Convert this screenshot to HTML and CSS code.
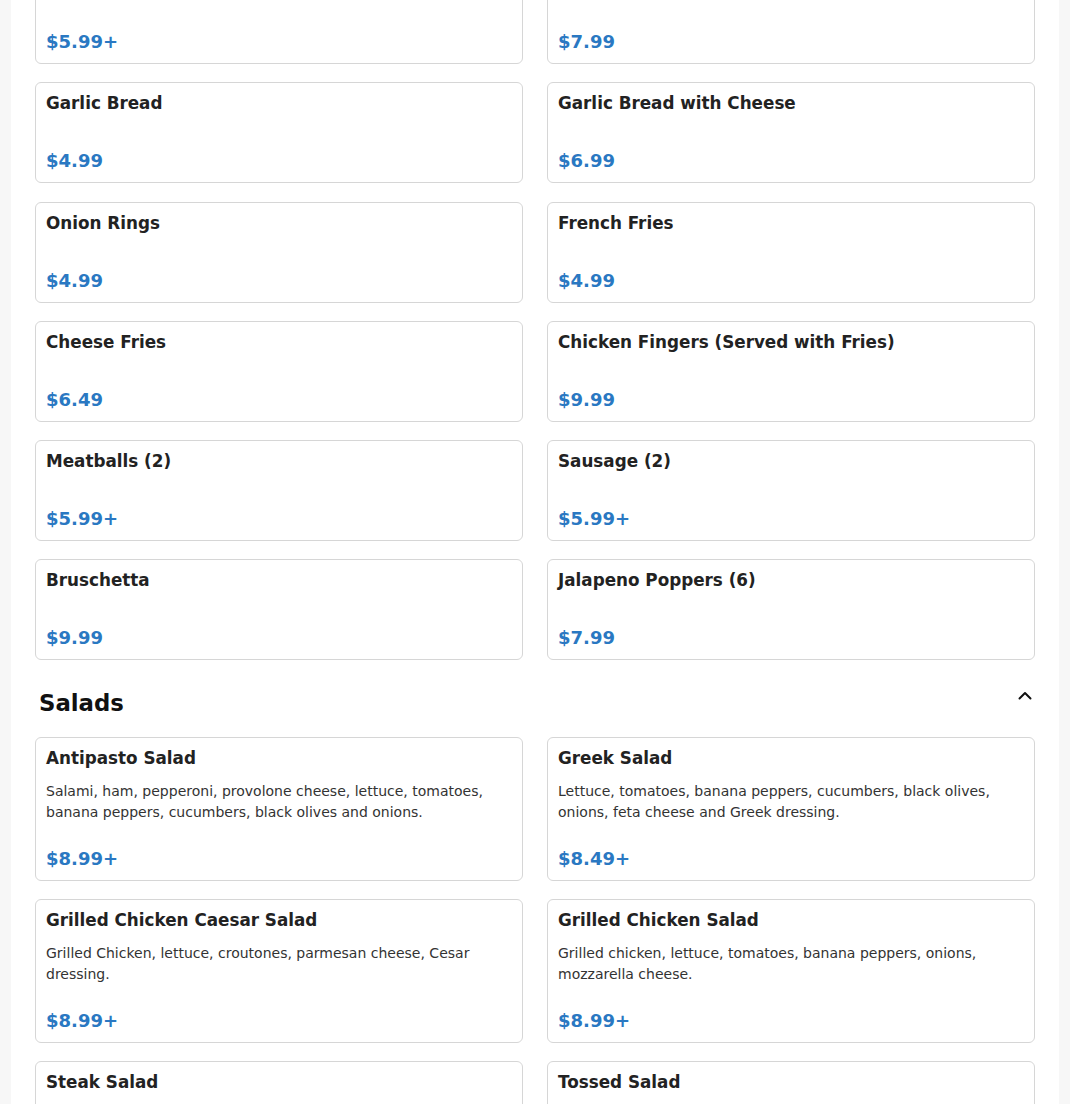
FILE: index.html
```html
<!DOCTYPE html>
<html lang="en">
<head>
<meta charset="utf-8">
<title>Menu</title>
<link rel="stylesheet" href="styles.css">
</head>
<body>
<main class="page">
  <section class="section section-scrolled">
    <div class="grid">
      <article class="card"><h3 class="card-title">Chicken Wings</h3><p class="card-desc"></p><div class="card-price">$5.99+</div></article>
      <article class="card"><h3 class="card-title">Mozzarella Sticks (6)</h3><p class="card-desc"></p><div class="card-price">$7.99</div></article>
      <article class="card"><h3 class="card-title">Garlic Bread</h3><p class="card-desc"></p><div class="card-price">$4.99</div></article>
      <article class="card"><h3 class="card-title">Garlic Bread with Cheese</h3><p class="card-desc"></p><div class="card-price">$6.99</div></article>
      <article class="card"><h3 class="card-title">Onion Rings</h3><p class="card-desc"></p><div class="card-price">$4.99</div></article>
      <article class="card"><h3 class="card-title">French Fries</h3><p class="card-desc"></p><div class="card-price">$4.99</div></article>
      <article class="card"><h3 class="card-title">Cheese Fries</h3><p class="card-desc"></p><div class="card-price">$6.49</div></article>
      <article class="card"><h3 class="card-title">Chicken Fingers (Served with Fries)</h3><p class="card-desc"></p><div class="card-price">$9.99</div></article>
      <article class="card"><h3 class="card-title">Meatballs (2)</h3><p class="card-desc"></p><div class="card-price">$5.99+</div></article>
      <article class="card"><h3 class="card-title">Sausage (2)</h3><p class="card-desc"></p><div class="card-price">$5.99+</div></article>
      <article class="card"><h3 class="card-title">Bruschetta</h3><p class="card-desc"></p><div class="card-price">$9.99</div></article>
      <article class="card"><h3 class="card-title">Jalapeno Poppers (6)</h3><p class="card-desc"></p><div class="card-price">$7.99</div></article>
    </div>
  </section>

  <section class="section">
    <header class="section-head">
      <h2 class="section-title">Salads</h2>
      <button class="toggle" aria-label="Collapse">
        <svg width="16" height="16" viewBox="0 0 16 16" fill="none" stroke="#111" stroke-width="2" stroke-linecap="round" stroke-linejoin="round"><polyline points="2.5,10.5 8,5 13.5,10.5"/></svg>
      </button>
    </header>
    <div class="grid">
      <article class="card"><h3 class="card-title">Antipasto Salad</h3><p class="card-desc">Salami, ham, pepperoni, provolone cheese, lettuce, tomatoes, banana peppers, cucumbers, black olives and onions.</p><div class="card-price">$8.99+</div></article>
      <article class="card"><h3 class="card-title">Greek Salad</h3><p class="card-desc">Lettuce, tomatoes, banana peppers, cucumbers, black olives, onions, feta cheese and Greek dressing.</p><div class="card-price">$8.49+</div></article>
      <article class="card"><h3 class="card-title">Grilled Chicken Caesar Salad</h3><p class="card-desc">Grilled Chicken, lettuce, croutones, parmesan cheese, Cesar dressing.</p><div class="card-price">$8.99+</div></article>
      <article class="card"><h3 class="card-title">Grilled Chicken Salad</h3><p class="card-desc">Grilled chicken, lettuce, tomatoes, banana peppers, onions, mozzarella cheese.</p><div class="card-price">$8.99+</div></article>
      <article class="card"><h3 class="card-title">Steak Salad</h3><p class="card-desc">Steak, lettuce, tomatoes, banana peppers, onions, mozzarella cheese.</p><div class="card-price">$10.99+</div></article>
      <article class="card"><h3 class="card-title">Tossed Salad</h3><p class="card-desc">Lettuce, tomatoes, cucumbers, onions, banana peppers.</p><div class="card-price">$5.99+</div></article>
    </div>
  </section>
</main>
</body>
</html>
```

FILE: styles.css
```css
* { box-sizing: border-box; }

html, body {
  margin: 0;
  padding: 0;
}

body {
  background: #f7f7f7;
  font-family: "DejaVu Sans", "Liberation Sans", sans-serif;
  color: #222;
}

.page {
  width: 1048px;
  margin: 0 auto;
  background: #fff;
  padding: 0 24px 40px;
  min-height: 1200px;
}

.section-scrolled {
  margin-top: -37px;
}

.grid {
  display: grid;
  grid-template-columns: 1fr 1fr;
  column-gap: 24px;
  row-gap: 18.25px;
}

.card {
  display: flex;
  flex-direction: column;
  border: 1px solid #d6d6d6;
  border-radius: 6px;
  padding: 10px;
  background: #fff;
}

.card-title {
  margin: 0;
  font-size: 16.8px;
  line-height: 20px;
  font-weight: 700;
  color: #222;
}

.card-desc {
  margin: 12px 0 0;
  font-size: 14px;
  line-height: 21px;
  color: #333;
}

.card-desc:not(:empty) {
  margin: 13px 0 -0.5px;
}

.card-price {
  margin-top: auto;
  padding-top: 25px;
  font-size: 18px;
  line-height: 22px;
  font-weight: 700;
  color: #2a78c2;
}

.section-head {
  display: flex;
  justify-content: space-between;
  align-items: flex-start;
  margin-top: 20px;
  padding: 9px 2px 7px 4px;
  margin-bottom: 13px;
}

.section-title {
  margin: 0;
  font-size: 22.8px;
  line-height: 28px;
  font-weight: 700;
  color: #111;
}

.toggle {
  border: 0;
  background: transparent;
  padding: 0;
  margin-top: -1px;
  width: 16px;
  height: 16px;
  display: flex;
  cursor: pointer;
}
```
